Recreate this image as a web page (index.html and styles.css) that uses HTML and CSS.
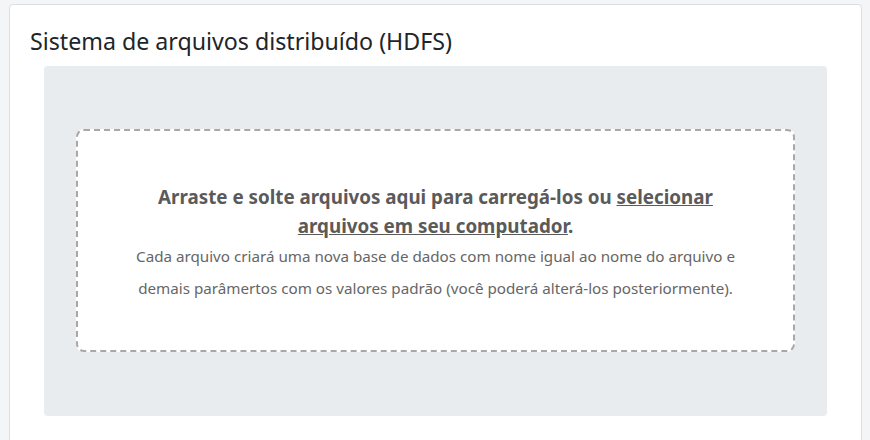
FILE: index.html
```html
<!DOCTYPE html>
<html lang="pt-BR">
<head>
<meta charset="utf-8">
<title>HDFS</title>
<link rel="stylesheet" href="styles.css">
</head>
<body>
<section class="card">
  <h2 class="card-title">Sistema de arquivos distribuído (HDFS)</h2>
  <div class="drop-area">
    <div class="drop-zone">
      <p class="drop-main">Arraste e solte arquivos aqui para carregá-los ou <a href="#" class="drop-link">selecionar arquivos em seu computador</a>.</p>
      <p class="drop-hint">Cada arquivo criará uma nova base de dados com nome igual ao nome do arquivo e demais parâmertos com os valores padrão (você poderá alterá-los posteriormente).</p>
    </div>
  </div>
</section>
</body>
</html>
```

FILE: styles.css
```css
html, body {
  margin: 0;
  padding: 0;
  background: #f4f5f6;
  font-family: "Noto Sans", "Open Sans", sans-serif;
}
body {
  padding: 4px 8px 0 9px;
  height: 440px;
  box-sizing: border-box;
  overflow: hidden;
}
.card {
  background: #fff;
  border: 1px solid #dcdfe2;
  border-radius: 4px;
  padding: 21px 34px 20px 20px;
  height: 460px;
  box-sizing: border-box;
}
.card-title {
  margin: 0 0 10px 0;
  font-size: 23.2px;
  font-weight: 400;
  color: #212529;
  line-height: 30px;
}
.drop-area {
  margin: 0 0 0 14px;
  background: #e9ecef;
  border-radius: 4px;
  padding: 63px 32px 64px 32px;
}
.drop-zone {
  background: #fff;
  border: 2px dashed #a8a8a8;
  border-radius: 8px;
  height: 223px;
  box-sizing: border-box;
  display: flex;
  flex-direction: column;
  justify-content: center;
  align-items: center;
  text-align: center;
  padding: 6px 50px 0 50px;
}
.drop-main {
  margin: 0 0 -1px 0;
  font-size: 18.8px;
  font-weight: 700;
  color: #5a5a5a;
  line-height: 29px;
}
.drop-link {
  color: #5a5a5a;
  text-decoration: underline;
}
.drop-hint {
  margin: 0;
  font-size: 15.2px;
  color: #666;
  line-height: 32px;
}
```
